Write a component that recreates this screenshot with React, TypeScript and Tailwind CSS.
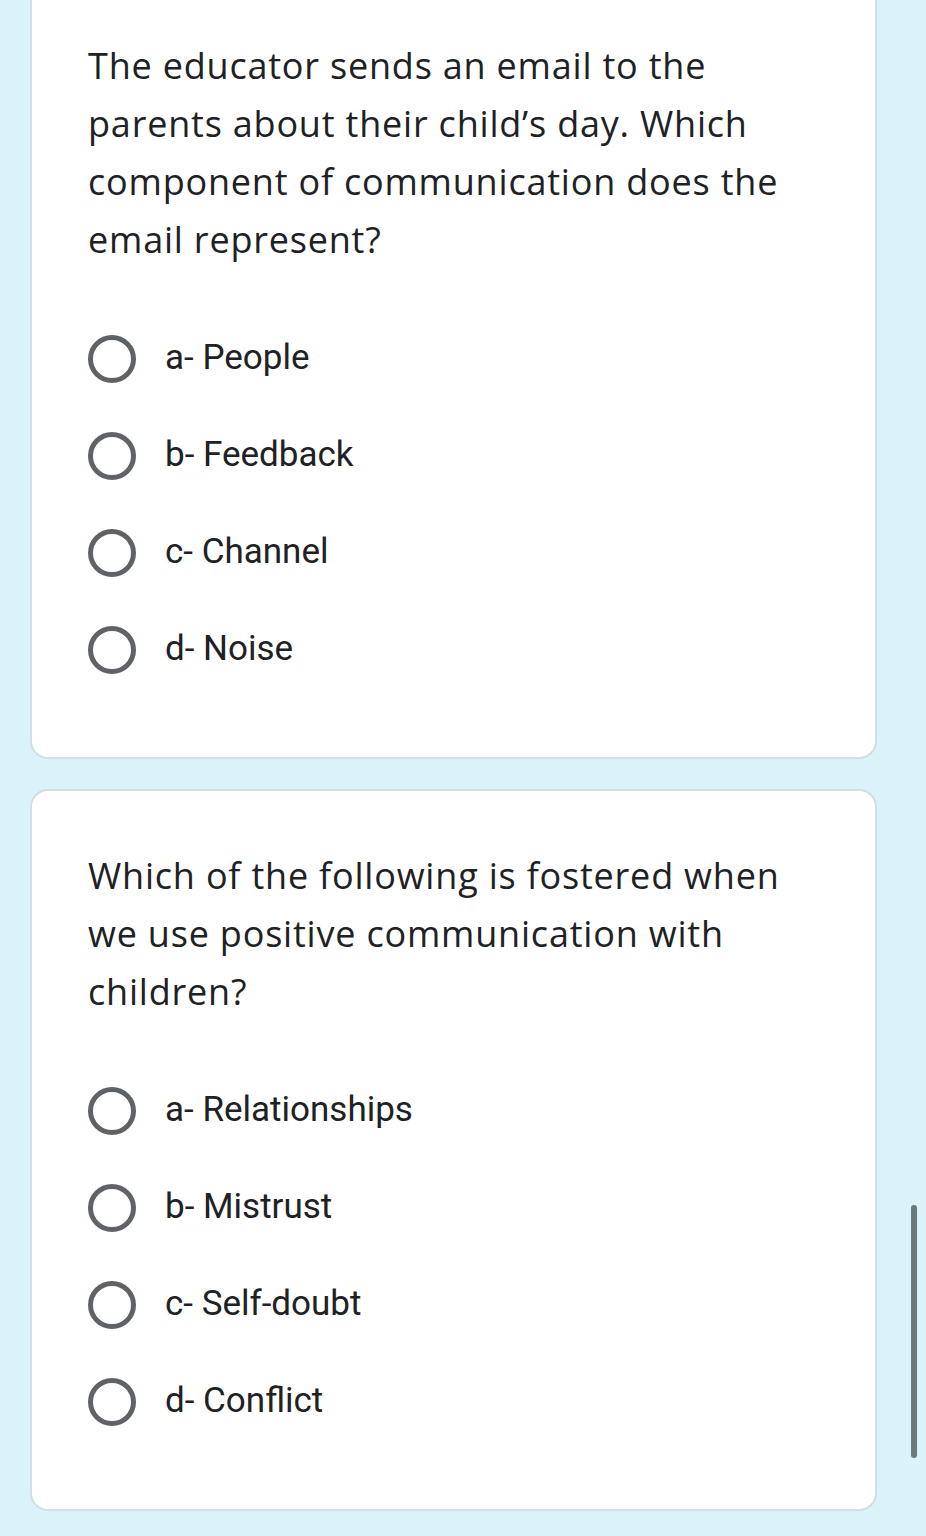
const questions = [
  {
    text: "The educator sends an email to the parents about their child’s day. Which component of communication does the email represent?",
    options: ["a- People", "b- Feedback", "c- Channel", "d- Noise"],
  },
  {
    text: "Which of the following is fostered when we use positive communication with children?",
    options: ["a- Relationships", "b- Mistrust", "c- Self-doubt", "d- Conflict"],
  },
];

function Radio() {
  return <span className="block h-[48px] w-[48px] shrink-0 rounded-full border-[5px] border-[#5f6368]" />;
}

export default function App() {
  return (
    <div className="relative h-[1536px] overflow-hidden bg-[#daf3f8]">
      <div className="flex flex-col gap-[30px] pl-[30px] pr-[49px] mt-[-21px]">
        {questions.map((q) => (
          <div
            key={q.text}
            className="rounded-[18px] border-2 border-[#d3dee2] bg-white pl-[56px] pr-[67px] pt-[56px] pb-[59px]"
          >
            <p
              className="text-[36px] leading-[58px] tracking-[0.8px] text-[#202124]"
              style={{ fontFamily: '"Open Sans", Roboto, sans-serif' }}
            >
              {q.text}
            </p>
            <div className="mt-[41px] flex flex-col">
              {q.options.map((o) => (
                <div key={o} className="flex h-[97px] items-center gap-[29px]">
                  <Radio />
                  <span
                    className="text-[35px] text-[#202124]"
                    style={{ fontFamily: 'Roboto, "Noto Sans", sans-serif' }}
                  >
                    {o}
                  </span>
                </div>
              ))}
            </div>
          </div>
        ))}
      </div>
      <div className="absolute left-[911px] top-[1205px] h-[253px] w-[6px] rounded-full bg-[#6a7b7c]" />
    </div>
  );
}
